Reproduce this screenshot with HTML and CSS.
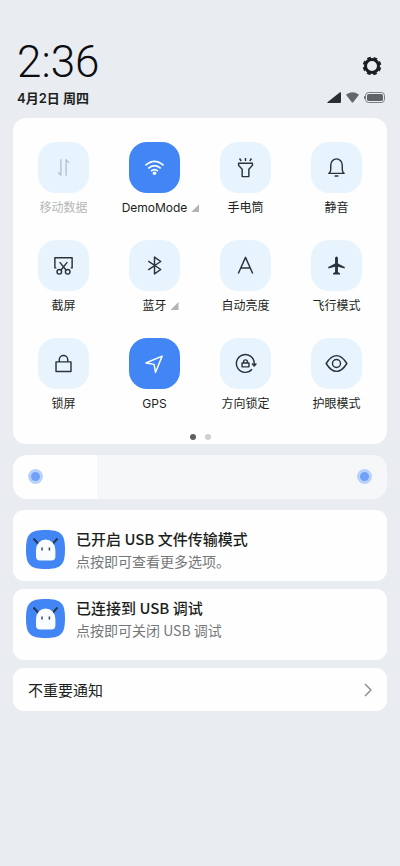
FILE: index.html
```html
<!DOCTYPE html>
<html lang="zh-CN">
<head>
<meta charset="utf-8">
<meta name="viewport" content="width=device-width, initial-scale=1">
<title>控制中心</title>
<link rel="stylesheet" href="styles.css">
</head>
<body>
<header class="header">
  <div class="header-row">
    <time class="clock">2:36</time>
    <button class="settings" type="button" aria-label="设置">
      <svg width="20" height="20" viewBox="0 0 20 20" fill="none" stroke="#1b1e22"><circle cx="10" cy="10" r="6.500" stroke-width="3"/><circle cx="10" cy="10" r="8.100" stroke-width="2.400" stroke-dasharray="3.600 2.762" stroke-dashoffset="-1.400"/></svg>
    </button>
  </div>
  <div class="header-row">
    <span class="date">4月2日 周四</span>
    <span class="status">
      <svg width="14" height="11" viewBox="0 0 14 11"><path d="M13 .3Q14 0 14 1V10Q14 11 13 11H1Q-.3 10.700 .7 9.900Z" fill="#2b2e31"/></svg>
      <svg width="13" height="11" viewBox="0 0 13 11"><path d="M.4 3.300Q-.1 2.700 .6 2.200Q6.500-1.800 12.400 2.200Q13.100 2.700 12.600 3.300L7.200 10.200Q6.500 11 5.800 10.200Z" fill="#64676a"/></svg>
      <svg width="21" height="11" viewBox="0 0 21 11"><rect x="1.500" y=".5" width="19" height="10" rx="3.200" fill="none" stroke="#7b7e80"/><rect x="3" y="2" width="16" height="7" rx="1.800" fill="#606365"/><path d="M.5 4v3" stroke="#7b7e80"/></svg>
    </span>
  </div>
</header>
<main class="content">
  <section class="panel" aria-label="快捷开关">
    <div class="tiles">
      <button class="tile tile-disabled" type="button" disabled>
        <span class="tile-icon"><svg viewBox="0 0 24 24"><path d="M9.300 3.500v16.500L6.300 17M14.700 20.500V4l3 3"/></svg></span>
        <span class="tile-label">移动数据</span>
      </button>
      <button class="tile tile-on" type="button">
        <span class="tile-icon"><svg viewBox="0 0 24 24"><path d="M2.600 9.800Q12 1.400 21.400 9.800M5.500 12.900Q12 7.100 18.500 12.900M8.400 15.800Q12 12.700 15.600 15.800" stroke-width="1.800"/><circle cx="12" cy="18" r="1.900" class="solid"/></svg></span>
        <span class="tile-label">DemoMode<i class="more"></i></span>
      </button>
      <button class="tile" type="button">
        <span class="tile-icon"><svg viewBox="0 0 24 24"><path d="M4.800 7.500h14.400v2.300l-3.700 4.100v7.600h-7v-7.600L4.800 9.800zM12 2v3.200M5.800 2.600l1.700 2.600M18.200 2.600l-1.700 2.600"/></svg></span>
        <span class="tile-label">手电筒</span>
      </button>
      <button class="tile" type="button">
        <span class="tile-icon"><svg viewBox="0 0 24 24"><path d="M4 18.100h16q-2-1.300-2-4V9.500a6 6.500 0 0 0-12 0v4.600q0 2.700-2 4zM10 20.900h4"/></svg></span>
        <span class="tile-label">静音</span>
      </button>
      <button class="tile" type="button">
        <span class="tile-icon"><svg viewBox="0 0 24 24"><path d="M4.500 14.500H3V4h18v10.500h-1.500M8 8.500l6.800 8.500M16 8.500L9.200 17"/><circle cx="7.600" cy="18.600" r="2.400"/><circle cx="16.400" cy="18.600" r="2.400"/></svg></span>
        <span class="tile-label">截屏</span>
      </button>
      <button class="tile" type="button">
        <span class="tile-icon"><svg viewBox="0 0 24 24"><path d="M5.500 7.500L18.500 16.200l-6.500 4.600V3.200L18.500 7.800 5.500 16.500"/></svg></span>
        <span class="tile-label">蓝牙<i class="more"></i></span>
      </button>
      <button class="tile" type="button">
        <span class="tile-icon"><svg viewBox="0 0 24 24"><path d="M4.500 20.300L12 3.500l7.500 16.800M7.200 14.600h9.600"/></svg></span>
        <span class="tile-label">自动亮度</span>
      </button>
      <button class="tile" type="button">
        <span class="tile-icon"><svg viewBox="0 0 24 24"><path class="solid" d="M10.500 4.500a1.500 1.800 0 0 1 3 0V9.800l7.100 3.700v1.700l-7.100-2v5.600l2.100 1.300V21.300H8.400V20.100l2.100-1.300v-5.600l-7.100 2v-1.700l7.100-3.700z"/></svg></span>
        <span class="tile-label">飞行模式</span>
      </button>
      <button class="tile" type="button">
        <span class="tile-icon"><svg viewBox="0 0 24 24"><path d="M4.200 10.300h15.600v10H4.200zM7.600 10.300V8a4.400 4.400 0 0 1 8.800 0v2.300"/></svg></span>
        <span class="tile-label">锁屏</span>
      </button>
      <button class="tile tile-on" type="button">
        <span class="tile-icon"><svg viewBox="0 0 24 24"><path d="M20 4.300L3 11.500l8.600 1.400L13 21.300z"/></svg></span>
        <span class="tile-label">GPS</span>
      </button>
      <button class="tile" type="button">
        <span class="tile-icon"><svg viewBox="0 0 24 24"><path d="M18.800 18.100a9.300 9.300 0 1 1 2.300-6.500v2.400M18.900 12l2.200 2.600 2.200-2.600M8.400 11.500h7.200v4H8.400zM10 11.500v-1.300a2 2 0 0 1 4 0v1.300"/></svg></span>
        <span class="tile-label">方向锁定</span>
      </button>
      <button class="tile" type="button">
        <span class="tile-icon"><svg viewBox="0 0 24 24"><path d="M1.200 12Q6.300 3.800 12 3.800T22.800 12Q17.700 20.200 12 20.200T1.200 12z"/><circle cx="12" cy="12" r="4.200"/></svg></span>
        <span class="tile-label">护眼模式</span>
      </button>
    </div>
    <div class="pager"><span class="dot dot-current"></span><span class="dot"></span></div>
  </section>

  <div class="brightness">
    <input class="brightness-range" type="range" min="0" max="100" value="23" aria-label="亮度">
    <span class="knob knob-low"></span>
    <span class="knob knob-high"></span>
  </div>

  <article class="notice">
    <svg class="notice-icon" viewBox="0 0 39 39"><path d="M0 19.500C0 4 4 0 19.500 0S39 4 39 19.500 35 39 19.500 39 0 35 0 19.500z" fill="#4285f4"/><path d="M7.500 8.500l5 5.500M31.500 8.500l-5 5.500" stroke="#26384f" stroke-width="2"/><path d="M10 20a9.700 10.500 0 0 1 19.400 0v6.500q0 4-4 4H14q-4 0-4-4z" fill="#f8fcff"/><path d="M16 17.500v3M23.400 17.500v3" stroke="#3c4650" stroke-width="1.500"/></svg>
    <div class="notice-text">
      <h2 class="notice-title">已开启 USB 文件传输模式</h2>
      <p class="notice-detail">点按即可查看更多选项。</p>
    </div>
  </article>
  <article class="notice notice-top">
    <svg class="notice-icon" viewBox="0 0 39 39"><path d="M0 19.500C0 4 4 0 19.500 0S39 4 39 19.500 35 39 19.500 39 0 35 0 19.500z" fill="#4285f4"/><path d="M7.500 8.500l5 5.500M31.500 8.500l-5 5.500" stroke="#26384f" stroke-width="2"/><path d="M10 20a9.700 10.500 0 0 1 19.400 0v6.500q0 4-4 4H14q-4 0-4-4z" fill="#f8fcff"/><path d="M16 17.500v3M23.400 17.500v3" stroke="#3c4650" stroke-width="1.500"/></svg>
    <div class="notice-text">
      <h2 class="notice-title">已连接到 USB 调试</h2>
      <p class="notice-detail">点按即可关闭 USB 调试</p>
    </div>
  </article>
  <button class="minor" type="button">
    <span>不重要通知</span>
    <svg width="8" height="14" viewBox="0 0 8 14" fill="none" stroke="#8c8f92" stroke-width="1.500"><path d="M1 1l6 6-6 6"/></svg>
  </button>
</main>
</body>
</html>
```

FILE: styles.css
```css
* {
  box-sizing: border-box;
}

body {
  margin: 0;
  min-height: 100vh;
  background: #e9ecf1;
  color: #1c1e20;
  font-family: "Noto Sans CJK SC", sans-serif;
}

button {
  margin: 0;
  padding: 0;
  border: 0;
  background: none;
  color: inherit;
  font: inherit;
}

svg {
  display: block;
}

.header {
  padding: 38px 15px 0 17px;
}

.header-row {
  display: flex;
  align-items: center;
  justify-content: space-between;
}

.clock {
  font: 300 44px/48px Roboto, sans-serif;
  color: #0b0d10;
}

.settings {
  margin: 7px 3px 0 0;
}

.date {
  font-family: Inter, "Noto Sans CJK SC", sans-serif;
  font-size: 13px;
  font-weight: 600;
  line-height: 20px;
  margin-top: 2px;
}

.status {
  display: flex;
  gap: 5px;
}

.content {
  display: flex;
  flex-direction: column;
  gap: 8px;
  padding: 10px 13px 24px;
}

.panel {
  padding: 24px 5px 4px;
  border-radius: 13px;
  background: #fefefe;
}

.tiles {
  display: grid;
  grid-template-columns: repeat(4, 1fr);
  row-gap: 21px;
}

.tile {
  display: flex;
  flex-direction: column;
  align-items: center;
  gap: 4px;
  min-width: 0;
}

.tile-icon {
  display: grid;
  place-items: center;
  width: 51px;
  height: 51px;
  border-radius: 18px;
  background: #e8f4fd;
  color: #28333c;
}

.tile-icon svg {
  width: 23px;
  height: 23px;
  fill: none;
  stroke: currentColor;
  stroke-width: 1.5px;
  stroke-linejoin: round;
}

.tile-icon .solid {
  fill: currentColor;
  stroke: none;
}

.tile-on .tile-icon {
  background: #4285f4;
  color: #fff;
}

.tile-disabled {
  color: #b4b6b8;
}

.tile-disabled .tile-icon {
  color: #b7c3cc;
}

.tile-label {
  position: relative;
  font-family: Inter, "Noto Sans CJK SC", sans-serif;
  font-size: 12px;
  line-height: 22px;
  white-space: nowrap;
}

.more {
  position: absolute;
  top: 7px;
  left: 100%;
  width: 8px;
  height: 8px;
  margin-left: 4px;
  background: #b3b3b3;
  clip-path: polygon(100% 0, 100% 100%, 0 100%);
}

.pager {
  display: flex;
  justify-content: center;
  gap: 9px;
  margin-top: 19px;
}

.dot {
  width: 6px;
  height: 6px;
  border-radius: 50%;
  background: #cfcfcf;
}

.dot-current {
  background: #606060;
}

.brightness {
  position: relative;
  height: 44px;
  margin: 3px 0;
  border-radius: 14px;
  overflow: hidden;
}

.brightness-range {
  display: block;
  width: 100%;
  height: 100%;
  margin: 0;
  appearance: none;
  background: linear-gradient(to right, #fefefe 22.5%, #f5f7f9 22.5%);
}

.brightness-range::-webkit-slider-thumb {
  appearance: none;
  width: 4px;
  height: 44px;
  background: transparent;
}

.knob {
  position: absolute;
  top: 14px;
  width: 15px;
  height: 15px;
  border: 3px solid #b9d2fb;
  border-radius: 50%;
  background: #70a0f8;
  pointer-events: none;
}

.knob-low {
  left: 15px;
}

.knob-high {
  right: 15px;
}

.notice {
  display: flex;
  gap: 11px;
  min-height: 71px;
  padding: 18px 13px 7px;
  border-radius: 11px;
  background: #fefefe;
}

.notice-top {
  padding-top: 8px;
}

.notice-icon {
  flex: none;
  width: 39px;
  height: 39px;
  margin-top: 2px;
}

.notice-title,
.notice-detail {
  margin: 0;
}

.notice-title {
  font-size: 15px;
  font-weight: 500;
  line-height: 22px;
}

.notice-detail {
  color: #75777a;
  font-size: 14px;
  line-height: 22px;
}

.minor {
  display: flex;
  align-items: center;
  justify-content: space-between;
  height: 43px;
  padding: 0 15px;
  border-radius: 11px;
  background: #fefefe;
  font-size: 15px;
}
```
